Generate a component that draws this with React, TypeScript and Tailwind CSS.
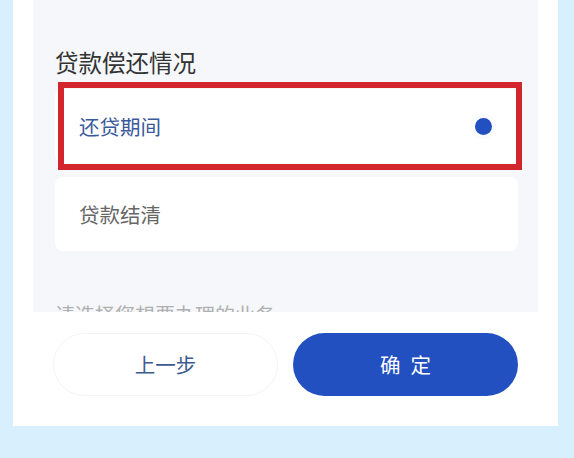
const options = [
  { id: 'repaying', label: '还贷期间', checked: true },
  { id: 'settled', label: '贷款结清', checked: false },
];

const font = { fontFamily: '"Noto Sans CJK SC", "Noto Sans", sans-serif' };

export default function App() {
  return (
    <div className="h-[458px] w-[574px] bg-[#d8f0fd]" style={font}>
      <div className="mx-[13px] flex h-[426px] w-[545px] flex-col bg-white">
        {/* Question panel */}
        <div className="mx-[20px] h-[312px] overflow-hidden bg-[#f5f7fa] pl-[22px] pr-[20px]">
          <h2 className="mt-[46px] text-[23.5px] leading-[32px] text-[#333]">贷款偿还情况</h2>

          <div className="mt-[11px] flex flex-col gap-[14px]">
            {options.map((opt) => (
              <div key={opt.id} className="relative">
                <div className="flex h-[74px] items-center justify-between rounded-[8px] bg-white pl-[24px] pr-[22px]">
                  <span
                    className={`text-[20.5px] ${opt.checked ? 'text-[#3a5a9c]' : 'text-[#666]'}`}
                  >
                    {opt.label}
                  </span>
                  <span
                    className={`flex h-[26px] w-[26px] items-center justify-center rounded-full ${
                      opt.checked ? 'bg-[#fafbfd]' : ''
                    }`}
                  >
                    {opt.checked && <span className="h-[17px] w-[17px] rounded-full bg-[#2350c0]" />}
                  </span>
                </div>
                {/* annotation highlight */}
                {opt.checked && (
                  <div className="absolute -bottom-[7px] left-[3px] -right-[4px] -top-[7px] border-[6px] border-[#d3262c]" />
                )}
              </div>
            ))}
          </div>

          <p className="mt-[50px] text-[20px] leading-[28px] text-[#b0b0b0]">请选择您想要办理的业务</p>
        </div>

        {/* Footer buttons */}
        <div className="flex gap-[15px] px-[40px] pt-[21px]">
          <button className="h-[63px] w-[225px] rounded-full border border-[#f3f4f6] bg-white text-[20.5px] text-[#3d5a8f]">
            上一步
          </button>
          <button className="h-[63px] w-[225px] rounded-full bg-[#2350c0] pl-[10px] text-[20.5px] tracking-[10px] text-white">
            确定
          </button>
        </div>
      </div>
    </div>
  );
}
